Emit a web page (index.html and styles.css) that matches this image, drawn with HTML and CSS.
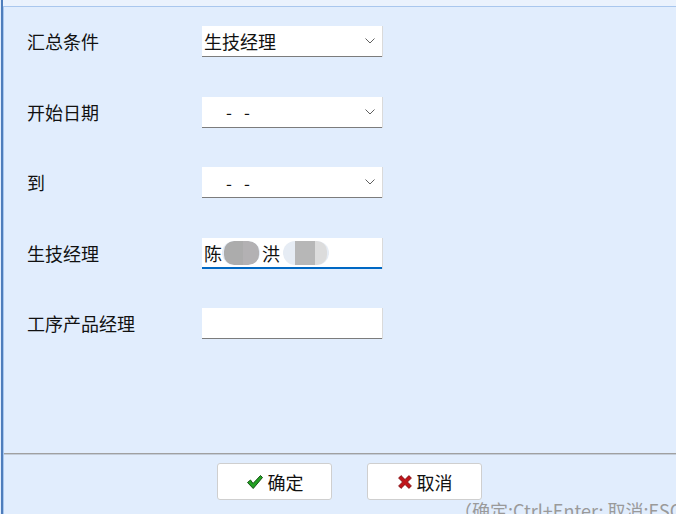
FILE: index.html
```html
<!DOCTYPE html>
<html lang="zh-CN">
<head>
<meta charset="utf-8">
<link rel="stylesheet" href="styles.css">
</head>
<body>
<div class="window">
  <div class="topbar"></div>
  <div class="panel">
    <div class="form">
      <div class="label">汇总条件</div>
      <div class="field select"><span class="value">生技经理</span><svg class="chev" width="10" height="6" viewBox="0 0 10 6"><path d="M0.5 0.5 L5 5 L9.5 0.5" fill="none" stroke="#606060" stroke-width="1"/></svg></div>

      <div class="label">开始日期</div>
      <div class="field select"><span class="date"><span>-</span><span>-</span></span><svg class="chev" width="10" height="6" viewBox="0 0 10 6"><path d="M0.5 0.5 L5 5 L9.5 0.5" fill="none" stroke="#606060" stroke-width="1"/></svg></div>

      <div class="label">到</div>
      <div class="field select"><span class="date"><span>-</span><span>-</span></span><svg class="chev" width="10" height="6" viewBox="0 0 10 6"><path d="M0.5 0.5 L5 5 L9.5 0.5" fill="none" stroke="#606060" stroke-width="1"/></svg></div>

      <div class="label">生技经理</div>
      <div class="field active"><span class="value">陈</span><span class="blur blur1"><i></i><i></i></span><span class="value">洪</span><span class="blur blur2"><i></i><i></i></span></div>

      <div class="label">工序产品经理</div>
      <div class="field"></div>
    </div>
    <div class="footer">
      <div class="buttons">
        <button class="btn"><svg width="18" height="16" viewBox="0 0 18 16"><path d="M1.5 8.5 L4.5 6 L7 9.5 L14.5 1.5 L16.5 3.5 L7.2 14.5 Z" fill="#22a122" stroke="#145214" stroke-width="1" stroke-linejoin="round"/></svg>确定</button>
        <button class="btn"><svg width="16" height="16" viewBox="0 0 15 15"><path d="M1.5 3.8 L3.8 1.5 L7.5 5.2 L11.2 1.5 L13.5 3.8 L9.8 7.5 L13.5 11.2 L11.2 13.5 L7.5 9.8 L3.8 13.5 L1.5 11.2 L5.2 7.5 Z" fill="#c0141a" stroke="#7a0a0e" stroke-width="0.8" stroke-linejoin="round"/></svg>取消</button>
      </div>
      <div class="hint">（确定:Ctrl+Enter; 取消:ESC）</div>
    </div>
  </div>
</div>
</body>
</html>
```
FILE: styles.css
```css
html, body {
  margin: 0;
  padding: 0;
  width: 676px;
  height: 514px;
  overflow: hidden;
  background: #e1edfd;
  font-family: "Noto Sans CJK SC", "Noto Sans", sans-serif;
  color: #111;
}

.window {
  margin-left: 1px;
  border-left: 2px solid #4e7dbb;
  height: 514px;
  display: flex;
  flex-direction: column;
}

.topbar {
  height: 6px;
  background: #eaf2fd;
  flex: none;
}

.panel {
  flex: 1;
  border-top: 1px solid #a9c7ee;
  border-left: 1px solid #a9c7ee;
  display: flex;
  flex-direction: column;
}

.form {
  flex: 1;
  display: grid;
  grid-template-columns: 175px 180px;
  grid-auto-rows: 31px;
  row-gap: 39.5px;
  padding: 19px 0 0 23px;
  align-content: start;
}

.label {
  font-size: 18px;
  line-height: 31px;
  white-space: nowrap;
}

.field {
  box-sizing: border-box;
  height: 31px;
  background: #fff;
  border-bottom: 1px solid #7c7c7c;
  box-shadow: 1px 0 0 #dadada;
  display: flex;
  align-items: center;
  padding-left: 2px;
  font-size: 18px;
  position: relative;
}

.field.active {
  border-bottom: 2px solid #0068c4;
  padding-top: 1px;
}

.select .chev {
  margin-left: auto;
  margin-right: 7px;
}

.value {
  line-height: 28px;
}

.date {
  display: flex;
  gap: 12px;
  padding-left: 22px;
  font-size: 17px;
}

.blur {
  display: flex;
  height: 24px;
  border-radius: 12px;
  overflow: hidden;
  background: #e4ebf5;
  align-items: stretch;
}

.blur i {
  display: block;
}

.blur1 {
  width: 38px;
  margin-left: 0;
  margin-right: 2px;
}
.blur1 i:first-child { width: 19px; background: #acacac; margin-left: 2px; border-radius: 10px 0 0 10px; }
.blur1 i:last-child { width: 16px; background: #b3b1b3; border-radius: 0 10px 10px 0; }

.blur2 {
  width: 46px;
  margin-left: 3px;
  background: #e6ecf4;
}
.blur2 i:first-child { width: 20px; background: #b7b7b7; margin-left: 12px; }
.blur2 i:last-child { width: 12px; background: #dcdcdc; border-radius: 0 10px 10px 0; }

.footer {
  flex: none;
  height: 60px;
  border-top: 1px solid #a0a0a0;
  box-shadow: inset 0 1px 0 #c3ccd8;
  display: flex;
  flex-direction: column;
}

.buttons {
  display: flex;
  gap: 35px;
  padding: 9px 0 0 213px;
}

.btn {
  box-sizing: border-box;
  width: 115px;
  height: 37px;
  background: #fff;
  border: 1px solid #cfcfcf;
  border-radius: 3px;
  font-family: inherit;
  font-size: 18px;
  color: #111;
  display: flex;
  align-items: center;
  justify-content: center;
  gap: 4px;
  padding: 0;
}

.hint {
  padding-left: 450px;
  font-size: 18px;
  line-height: 20px;
  color: #9a9a9a;
  white-space: nowrap;
}
```
